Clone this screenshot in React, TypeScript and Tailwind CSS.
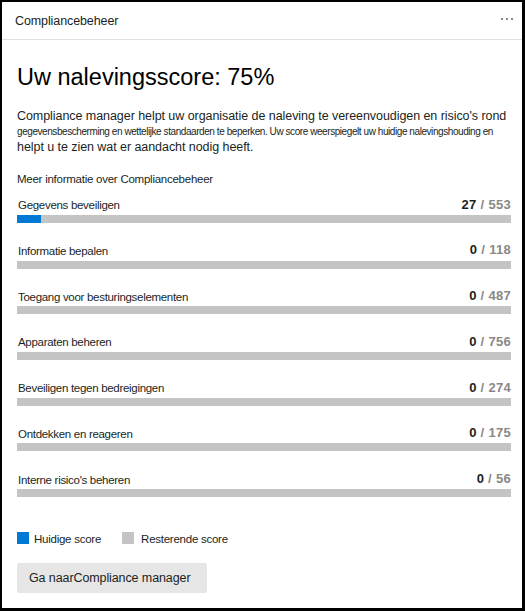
const rows = [
  { label: 'Gegevens beveiligen', score: 27, total: 553 },
  { label: 'Informatie bepalen', score: 0, total: 118 },
  { label: 'Toegang voor besturingselementen', score: 0, total: 487 },
  { label: 'Apparaten beheren', score: 0, total: 756 },
  { label: 'Beveiligen tegen bedreigingen', score: 0, total: 274 },
  { label: 'Ontdekken en reageren', score: 0, total: 175 },
  { label: "Interne risico's beheren", score: 0, total: 56 },
];

export default function App() {
  return (
    <div
      className="w-[525px] h-[611px] bg-white border-black border-l-2 border-t-2 border-r-[3px] border-b-[3px] text-[#201f1e] overflow-hidden"
      style={{ fontFamily: '"Liberation Sans", Arial, sans-serif' }}
    >
      {/* header */}
      <div className="h-[38px] flex items-center justify-between pl-[13px] pr-[9px] border-b border-[#e1e1e1]">
        <span className="text-[12.5px] leading-[16px] tracking-[-0.1px] mt-[1px]">Compliancebeheer</span>
        <div className="flex gap-[3px] -mt-[4px]">
          <span className="w-[2px] h-[2px] bg-[#8a8886]" />
          <span className="w-[2px] h-[2px] bg-[#8a8886]" />
          <span className="w-[2px] h-[2px] bg-[#8a8886]" />
        </div>
      </div>

      <div className="pl-[15px] pr-[11px]">
        <h1 className="mt-[21px] text-[23.5px] leading-[32px] text-black">Uw nalevingsscore: 75%</h1>

        <div className="mt-[15px] whitespace-nowrap">
          <div className="text-[12.5px] leading-[16px] tracking-[-0.06px]">
            Compliance manager helpt uw organisatie de naleving te vereenvoudigen en risico's rond
          </div>
          <div className="text-[10px] leading-[15px] tracking-[-0.43px]">
            gegevensbescherming en wettelijke standaarden te beperken. Uw score weerspiegelt uw huidige nalevingshouding en
          </div>
          <div className="text-[12.5px] leading-[16px] tracking-[-0.06px]">helpt u te zien wat er aandacht nodig heeft.</div>
        </div>

        <a className="block mt-[16px] text-[11.5px] leading-[16px] tracking-[-0.25px] text-[#201f1e]">
          Meer informatie over Compliancebeheer
        </a>

        <div className="mt-[9px] flex flex-col gap-[18.7px]">
          {rows.map((r) => (
            <div key={r.label}>
              <div className="flex items-center justify-between h-[16px] mt-[2px] pl-[1px]">
                <span className="text-[11.5px] tracking-[-0.3px]">{r.label}</span>
                <span className="font-bold text-[13px] tracking-[0.3px] -mt-[3px]">
                  <span className="text-[#201f1e]">{r.score}</span>
                  <span className="text-[#8a8886]"> / {r.total}</span>
                </span>
              </div>
              <div className="mt-[1px] h-[8px] bg-[#c4c4c4]">
                <div className="h-full bg-[#0078d4]" style={{ width: `${(r.score / r.total) * 100}%` }} />
              </div>
            </div>
          ))}
        </div>

        <div className="mt-[34px] flex items-center text-[11.5px] leading-[16px] tracking-[-0.25px]">
          <span className="w-[12px] h-[12px] bg-[#0078d4] mr-[5px] -mt-[2px]" />
          <span className="mr-[21px]">Huidige score</span>
          <span className="w-[12px] h-[12px] bg-[#c4c4c4] mr-[7px] -mt-[2px]" />
          <span>Resterende score</span>
        </div>

        <button className="mt-[16px] w-[190px] h-[30px] bg-[#e6e6e6] rounded-[2px] text-left pl-[12px] text-[12.5px] tracking-[-0.1px] text-[#201f1e]">
          Ga naarCompliance manager
        </button>
      </div>
    </div>
  );
}
